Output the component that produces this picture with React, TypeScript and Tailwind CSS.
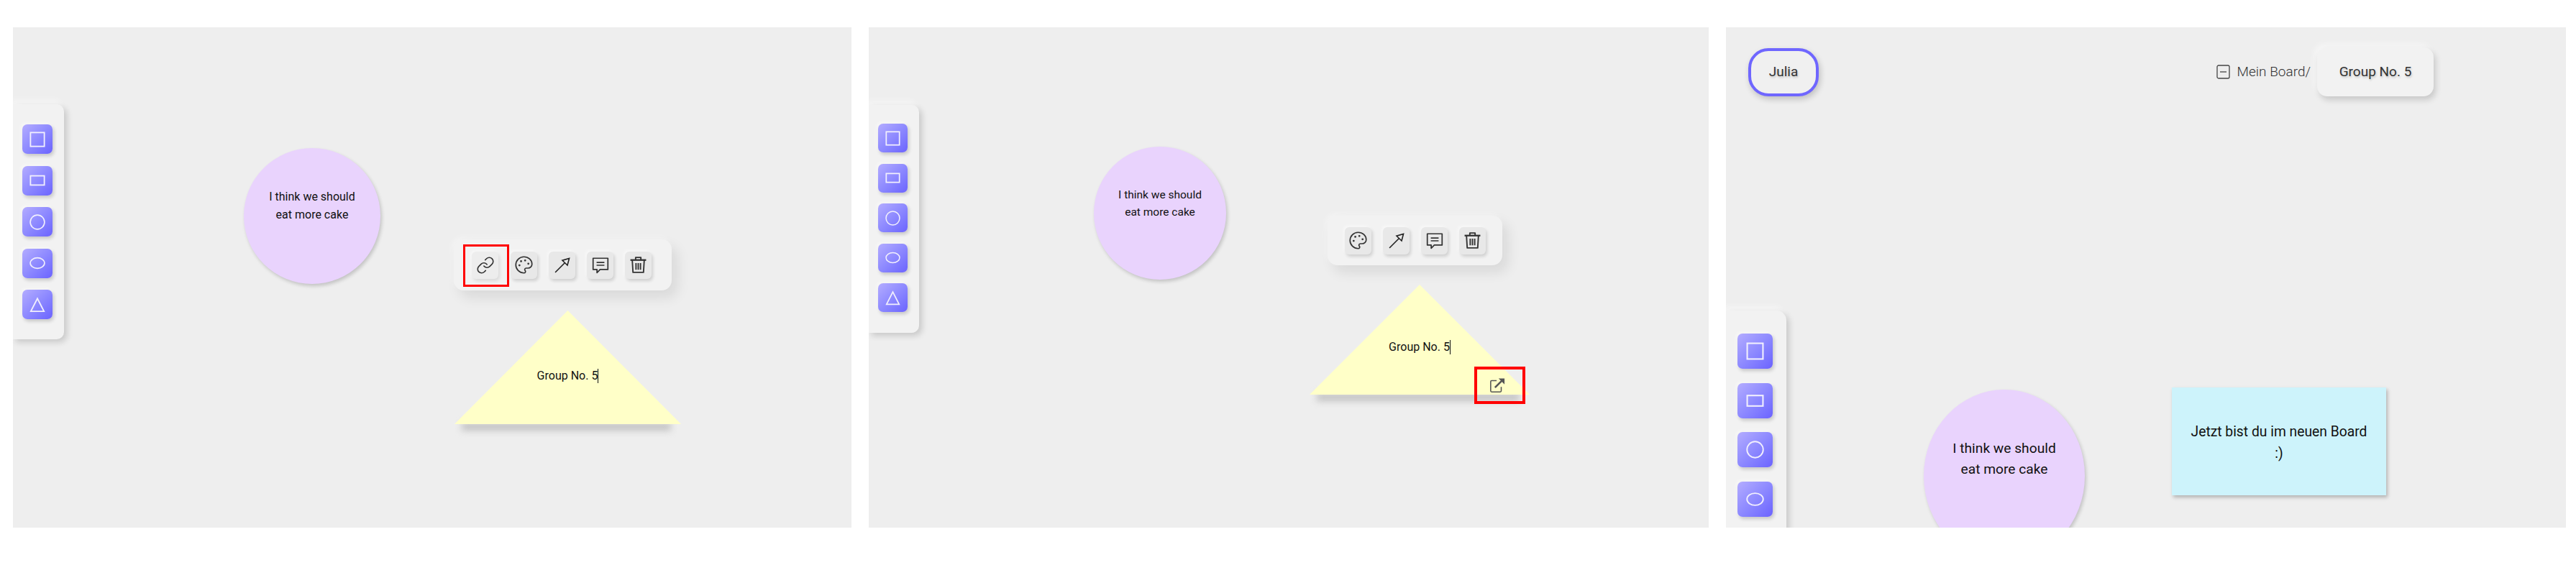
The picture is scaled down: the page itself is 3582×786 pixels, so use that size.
import React from 'react';
import { Link, Palette } from 'lucide-react';

const ROBOTO = "font-['Roboto',sans-serif]";

const SquareIcon = () => (
    <svg viewBox="0 0 24 24" className="w-full h-full" fill="none" stroke="currentColor" strokeWidth="2">
        <rect x="1.5" y="1.5" width="21" height="21" />
    </svg>
);
const RectIcon = () => (
    <svg viewBox="0 0 24 24" className="w-full h-full" fill="none" stroke="currentColor" strokeWidth="2">
        <rect x="1.5" y="5" width="21" height="14" />
    </svg>
);
const CircleIcon = () => (
    <svg viewBox="0 0 24 24" className="w-full h-full" fill="none" stroke="currentColor" strokeWidth="1.8">
        <circle cx="12" cy="12" r="10.8" />
    </svg>
);
const EllipseIcon = () => (
    <svg viewBox="0 0 24 24" className="w-full h-full" fill="none" stroke="currentColor" strokeWidth="1.8">
        <ellipse cx="12" cy="12" rx="10.8" ry="8" />
    </svg>
);
const TriangleIcon = () => (
    <svg viewBox="0 0 24 24" className="w-full h-full" fill="none" stroke="currentColor" strokeWidth="2">
        <path d="M12 2.5 L22 22 H2 Z" />
    </svg>
);

const ArrowIcon = () => (
    <svg viewBox="0 0 24 24" className="w-[24px] h-[24px]" fill="none" stroke="#222" strokeWidth="1.6" strokeLinejoin="miter">
        <path d="M2.5 21.5 L15 9" strokeLinecap="round" />
        <path d="M21.5 2.5 L19 12 L12 5.2 Z" />
    </svg>
);
const CommentIcon = () => (
    <svg viewBox="0 0 24 24" className="w-[26px] h-[26px]" fill="none" stroke="#333" strokeWidth="1.6" strokeLinejoin="round">
        <path d="M2.5 3 H21.5 V17.5 H11.5 L7.5 21.5 V17.5 H2.5 Z" />
        <path d="M7 8.5 H17 M7 12 H17" />
    </svg>
);
const TrashIcon = () => (
    <svg viewBox="0 0 24 24" className="w-[25px] h-[25px]" fill="none" stroke="#333" strokeWidth="1.8" strokeLinejoin="round">
        <path d="M1.5 5.5 H22.5" strokeWidth="2.2" />
        <path d="M8.5 5 V2 H15.5 V5" />
        <path d="M4 5.5 L5 22 H19 L20 5.5" />
        <path d="M9 9.5 V18.5 M12 9.5 V18.5 M15 9.5 V18.5" />
    </svg>
);
const ExternalIcon = () => (
    <svg viewBox="0 0 24 24" className="w-[22px] h-[22px]" fill="none" stroke="#555" strokeWidth="1.7" strokeLinejoin="round">
        <path d="M11 5 H3.5 A1.5 1.5 0 0 0 2 6.5 V20.5 A1.5 1.5 0 0 0 3.5 22 H16.5 A1.5 1.5 0 0 0 18 20.5 V14.5" />
        <path d="M8.5 15.5 L19 5" strokeWidth="2.8" />
        <path d="M14 1.5 H23 V10.5 Z" fill="#555" stroke="none" />
    </svg>
);

const railIcons = [SquareIcon, RectIcon, CircleIcon, EllipseIcon, TriangleIcon];

const ShapeButton: React.FC<{ index: number; size: string; glyph: string }> = ({ index, size, glyph }) => {
    const Icon = railIcons[index];
    return (
        <div className={`${size} flex items-center justify-center rounded-[7px] bg-gradient-to-br from-[#b4acff] to-[#6c62ff] text-[#f1effd] shadow-[2px_3px_5px_rgba(0,0,0,0.18),-2px_-2px_5px_rgba(255,255,255,0.5)]`}>
            <div className={glyph}>
                <Icon />
            </div>
        </div>
    );
};

const ToolButton: React.FC<{ children: React.ReactNode }> = ({ children }) => (
    <div className="w-[37px] h-[38px] flex items-center justify-center rounded-[6px] bg-[#e8e8e8] text-[#333] shadow-[2px_3px_4px_rgba(0,0,0,0.14),-2px_-2px_4px_rgba(255,255,255,0.5)]">
        {children}
    </div>
);

const ShapeMenu: React.FC<{ withLink?: boolean; className: string }> = ({ withLink, className }) => (
    <div className={`absolute flex items-center rounded-[14px] bg-[#f2f2f2] shadow-[8px_10px_18px_rgba(0,0,0,0.09),-3px_-3px_8px_rgba(255,255,255,0.35)] ${className}`}>
        {withLink && (
            <div className="relative mr-[17px]">
                <div className="w-[37px] h-[38px] flex items-center justify-center rounded-[6px] bg-[#ededed] text-[#333] shadow-[2px_3px_5px_rgba(0,0,0,0.1),-2px_-2px_4px_rgba(255,255,255,0.5)]">
                    <Link className="w-[26px] h-[26px]" strokeWidth={1.5} />
                </div>
                <div className="absolute left-[-12px] top-[-10px] w-[64px] h-[59px] border-[3px] border-[#ff0000]" />
            </div>
        )}
        <div className="flex gap-[16px]">
            <ToolButton><Palette className="w-[27px] h-[27px]" strokeWidth={1.5} /></ToolButton>
            <ToolButton><ArrowIcon /></ToolButton>
            <ToolButton><CommentIcon /></ToolButton>
            <ToolButton><TrashIcon /></ToolButton>
        </div>
    </div>
);

const Triangle: React.FC<{ className: string; textClass: string }> = ({ className, textClass }) => (
    <div className={`absolute ${className}`}>
        <div className="absolute left-[10px] right-[14px] bottom-[-9px] h-[11px] bg-[#c2c2c2] blur-[5px]" />
        <div className="absolute inset-0 bg-[#ffffc8] [clip-path:polygon(50%_0,100%_100%,0_100%)]" />
        <div className={`absolute left-0 right-0 flex justify-center ${textClass}`}>
            <span className="text-[16px] leading-[20px] text-[#111] border-r border-[#111]">Group No. 5</span>
        </div>
    </div>
);

const Bubble: React.FC<{ className: string; textClass: string }> = ({ className, textClass }) => (
    <div className={`absolute rounded-[50%] bg-[#e9d3fd] shadow-[2px_3px_5px_rgba(0,0,0,0.18)] text-center text-[#111] ${className}`}>
        <p className={textClass}>I think we should<br />eat more cake</p>
    </div>
);

const Board: React.FC<{ className?: string; children: React.ReactNode }> = ({ className, children }) => (
    <div className={`relative shrink-0 h-[696px] overflow-hidden bg-[#eeeeee] ${ROBOTO} ${className ?? ''}`}>
        {children}
    </div>
);

const RAIL = 'absolute left-0 flex flex-col bg-[#f2f2f2] shadow-[4px_4px_8px_rgba(0,0,0,0.16),-3px_-6px_8px_rgba(255,255,255,0.45)]';

export default function App() {
    return (
        <div className="w-[3582px] h-[786px] bg-white pt-[38px] pl-[18px] flex gap-[24px]">
            <Board className="w-[1166px]">
                <div className={`${RAIL} top-[107px] w-[71px] h-[327px] pl-[13px] pt-[28px] gap-[16.5px] rounded-r-[10px]`}>
                    {[0, 1, 2, 3, 4].map(i => (
                        <ShapeButton key={i} index={i} size="w-[42px] h-[41px]" glyph="w-[22px] h-[22px]" />
                    ))}
                </div>
                <Bubble className="left-[321px] top-[168px] w-[190px] h-[189px]" textClass="pt-[55px] text-[16px] leading-[25px]" />
                <ShapeMenu withLink className="left-[613px] top-[295px] w-[303px] h-[71px] pl-[25px]" />
                <Triangle className="left-[614px] top-[394px] w-[315px] h-[158px]" textClass="top-[81px]" />
            </Board>

            <Board className="w-[1168px]">
                <div className={`${RAIL} top-[108px] w-[70px] h-[317px] pl-[13px] pt-[26px] gap-[15.5px] rounded-r-[10px]`}>
                    {[0, 1, 2, 3, 4].map(i => (
                        <ShapeButton key={i} index={i} size="w-[41px] h-[40px]" glyph="w-[21px] h-[21px]" />
                    ))}
                </div>
                <Bubble className="left-[313px] top-[166px] w-[184px] h-[185px]" textClass="pt-[55px] text-[15.5px] leading-[24px]" />
                <ShapeMenu className="left-[638px] top-[262px] w-[243px] h-[69px] pl-[24px]" />
                <Triangle className="left-[613px] top-[358px] w-[306px] h-[153px]" textClass="top-[77px]" />
                <div className="absolute left-[842px] top-[472px] w-[71px] h-[52px] pr-[7px] flex items-center justify-center border-[4px] border-[#ff0000]">
                    <ExternalIcon />
                </div>
            </Board>

            <Board className="w-[1168px]">
                <header className="flex items-center justify-between pl-[31px] pr-[184px] pt-[28px]">
                    <div className="w-[98px] h-[67px] flex items-center justify-center rounded-[28px] border-[4px] border-[#6f66ff] bg-[#f0f0f0] text-[19px] text-[#333] shadow-[2px_4px_8px_rgba(0,0,0,0.2)] [text-shadow:1px_2px_3px_rgba(0,0,0,0.2)]">
                        Julia
                    </div>
                    <div className="flex items-center">
                        <svg viewBox="0 0 19 20" className="w-[19px] h-[20px] mr-[10px]" fill="none" stroke="#444" strokeWidth="1.3">
                            <rect x="1" y="1" width="17" height="18" rx="2" />
                            <path d="M5 10 H14" />
                        </svg>
                        <span className="text-[19px] font-light text-[#333] mr-[9px]">Mein Board/</span>
                        <div className="w-[162px] h-[68px] flex items-center justify-center rounded-[14px] bg-[#f2f2f2] text-[19px] text-[#333] shadow-[3px_5px_8px_rgba(0,0,0,0.16),-4px_-5px_10px_rgba(255,255,255,0.5)] [text-shadow:1px_2px_3px_rgba(0,0,0,0.2)]">
                            Group No. 5
                        </div>
                    </div>
                </header>
                <div className={`${RAIL} top-[394px] w-[84px] h-[400px] pl-[16px] pt-[32px] gap-[19.5px] rounded-tr-[14px]`}>
                    {[0, 1, 2, 3].map(i => (
                        <ShapeButton key={i} index={i} size="w-[49px] h-[49px]" glyph="w-[25px] h-[25px]" />
                    ))}
                </div>
                <Bubble className="left-[275px] top-[504px] w-[224px] h-[240px]" textClass="pt-[67px] text-[19.2px] leading-[29px]" />
                <div className="absolute left-[620px] top-[501px] w-[298px] h-[150px] pt-[47px] bg-[#cdf3fb] text-center text-[19.3px] leading-[30px] text-[#111] shadow-[2px_3px_5px_rgba(0,0,0,0.25)]">
                    Jetzt bist du im neuen Board<br />:)
                </div>
            </Board>
        </div>
    );
}
